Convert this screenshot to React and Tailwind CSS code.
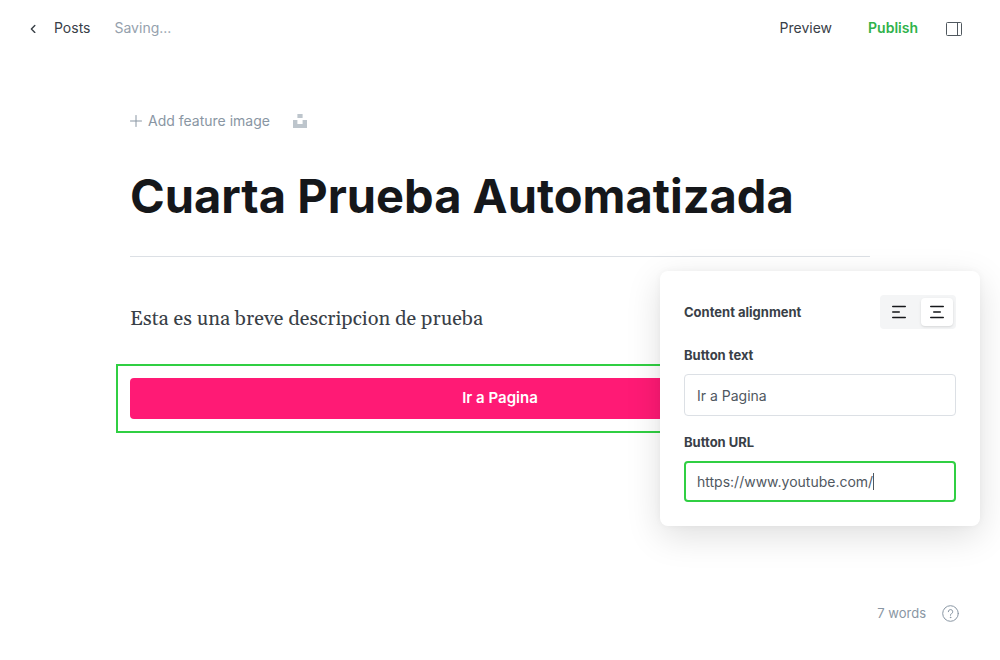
import React from "react";

function Header() {
  return (
    <header className="flex h-14 items-center justify-between pl-7 pr-[38px] text-sm leading-5">
      <nav className="flex items-center gap-6">
        <a href="#posts" className="flex items-center gap-4 text-[#394047]">
          <svg width="10" height="10" viewBox="0 0 10 10" fill="none" stroke="currentColor" strokeWidth="1.4" strokeLinecap="round" strokeLinejoin="round" aria-hidden="true">
            <path d="M6.8 2.4 3.4 6l3.4 3.5" />
          </svg>
          Posts
        </a>
        <span className="text-[#95a1ad]">Saving...</span>
      </nav>
      <div className="flex items-center">
        <button type="button" className="mr-9 text-[#394047]">Preview</button>
        <button type="button" className="mr-7 font-semibold text-[#30b24a]">Publish</button>
        <button type="button" aria-label="Settings" className="text-[#50585f]">
          <svg width="16" height="16" viewBox="0 0 16 16" fill="none" stroke="currentColor" aria-hidden="true">
            <rect x="0.5" y="2.5" width="15" height="13" rx="1" />
            <path d="M11.5 2.5v13" />
          </svg>
        </button>
      </div>
    </header>
  );
}

function AlignIcon({ middle }) {
  return (
    <svg width="16" height="14" viewBox="0 0 16 14" fill="none" stroke="#15171a" strokeWidth="1.5" strokeLinecap="round" aria-hidden="true">
      <path d="M1.75 1.5h12.5M1.75 12.5h12.5" />
      <path d={middle} />
    </svg>
  );
}

function ButtonSettings() {
  return (
    <aside className="absolute right-5 top-[271px] w-80 rounded-lg bg-white p-6 text-[13px] leading-5 text-[#394047] shadow-[0_0_7px_rgba(0,0,0,0.04),0_10px_35px_rgba(0,0,0,0.13)]">
      <div className="flex items-center justify-between">
        <span className="font-bold">Content alignment</span>
        <div className="flex rounded bg-[#f4f5f6] p-[3px]">
          <button type="button" aria-label="Align left" className="flex h-7 w-8 items-center justify-center">
            <AlignIcon middle="M1.75 7h6.5" />
          </button>
          <button type="button" aria-label="Align center" aria-pressed="true" className="ml-1.5 flex h-7 w-8 items-center justify-center rounded bg-white shadow-sm">
            <AlignIcon middle="M4.75 7h6.5" />
          </button>
        </div>
      </div>
      <label htmlFor="button-text" className="mt-4 block font-bold">Button text</label>
      <input id="button-text" defaultValue="Ir a Pagina" className="mt-[9px] block h-[42px] w-full rounded border border-[#dce0e5] px-3 text-sm text-[#50585f] outline-none" />
      <label htmlFor="button-url" className="mt-4 block font-bold">Button URL</label>
      <div className="relative mt-[9px]">
        <input id="button-url" defaultValue="https://www.youtube.com/" className="block h-[41px] w-full rounded border-2 border-[#30cf43] px-[11px] text-sm text-[#50585f] caret-transparent outline-none" />
        <span aria-hidden="true" className="absolute left-[189px] top-3 h-[17px] w-px bg-[#50585f]" />
      </div>
    </aside>
  );
}

export default function App() {
  return (
    <div className="relative flex min-h-screen flex-col bg-white font-['Inter',sans-serif]">
      <Header />
      <main className="mx-auto w-full max-w-[740px] flex-1 pt-[55px]">
        <div className="flex items-center gap-[23px] text-sm leading-5 text-[#8996a3]">
          <button type="button" className="flex items-center gap-1.5">
            <svg width="12" height="12" viewBox="0 0 12 12" fill="none" stroke="currentColor" strokeLinecap="round" aria-hidden="true">
              <path d="M6 .5v11M.5 6h11" />
            </svg>
            Add feature image
          </button>
          <button type="button" aria-label="Unsplash">
            <svg width="14" height="14" viewBox="0 0 14 14" fill="#bdc5cc" aria-hidden="true">
              <path d="M4.4 0h5.2v3.9H4.4zM0 6.1h4.4V10h5.2V6.1H14V14H0z" />
            </svg>
          </button>
        </div>
        <h1 className="mt-9 border-b border-[#dce0e5] pb-[31px] text-[47px] font-bold leading-[58px] text-[#15171a]">Cuarta Prueba Automatizada</h1>
        <p className="mt-[46px] font-[Georgia,Gelasio,serif] text-xl leading-8 text-[#394047]">Esta es una breve descripcion de prueba</p>
        <div className="-mx-3.5 mt-[29px] border-2 border-[#30cf43] p-3">
          <button type="button" className="block h-[41px] w-full rounded bg-[#ff1a75] text-[15px] font-semibold text-white">Ir a Pagina</button>
        </div>
      </main>
      <footer className="flex items-center justify-end gap-4 pb-[37px] pr-[41px] text-[13px] leading-5 text-[#8996a3]">
        <span>7 words</span>
        <button type="button" aria-label="Help">
          <svg width="17" height="17" viewBox="0 0 17 17" fill="none" stroke="currentColor" strokeLinecap="round" strokeLinejoin="round" aria-hidden="true">
            <circle cx="8.5" cy="8.5" r="7.8" />
            <path d="M6.3 6.7a2.2 2.2 0 1 1 3 2.1c-.5.2-.8.5-.8 1v.5" />
            <circle cx="8.5" cy="12.4" r=".3" fill="currentColor" />
          </svg>
        </button>
      </footer>
      <ButtonSettings />
    </div>
  );
}
